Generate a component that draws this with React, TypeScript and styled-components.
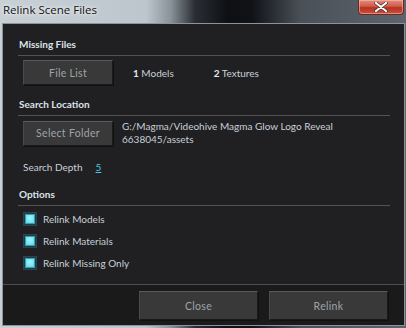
import React from "react";
import styled, { createGlobalStyle } from "styled-components";

const Global = createGlobalStyle`
  html, body { margin: 0; padding: 0; background: #3b4148; }
  body { width: 406px; height: 328px; overflow: hidden; font-family: "Lato", "Noto Sans", sans-serif; }
`;

const Window = styled.div`
  width: 406px;
  height: 328px;
  display: flex;
  flex-direction: column;
  background: linear-gradient(90deg, #c8d0d6 0%, #bcc6cc 36%, #8a939a 42%, #2a2e34 48%, #0e1014 56%, #101216 62%, #4a5058 74%, #5e646c 100%);
  box-sizing: border-box;
`;

const TitleBar = styled.div`
  height: 23px;
  display: flex;
  align-items: flex-start;
  justify-content: space-between;
  padding: 0 2px 0 3px;
  flex-shrink: 0;
`;

const Title = styled.div`
  font-family: "Open Sans", sans-serif;
  font-size: 11.5px;
  color: #101010;
  margin-top: 2px;
  text-shadow: 0 0 6px rgba(255,255,255,0.9), 0 0 3px rgba(255,255,255,0.8);
`;

const CloseBtn = styled.div`
  width: 46px;
  height: 15px;
  border: 1px solid #6a2a24;
  border-top: none;
  border-radius: 0 0 4px 4px;
  background: linear-gradient(180deg, #e09080 0%, #d05a48 45%, #b8301e 55%, #c85240 100%);
  display: flex;
  align-items: center;
  justify-content: center;
  box-shadow: inset 0 0 0 1px rgba(255,200,190,0.5);
  box-sizing: border-box;
`;

const Client = styled.div`
  flex: 1;
  margin: 0 1px 2px 2px;
  border: 1px solid #8a949c;
  background: #202022;
  display: flex;
  flex-direction: column;
  color: #c8d0d8;
  font-size: 10px;
`;

const Body = styled.div`
  flex: 1;
  padding: 13px 14px 0 15px;
  display: flex;
  flex-direction: column;
`;

const Heading = styled.div<{ $mt?: number }>`
  font-weight: 700;
  color: #dce2e8;
  font-size: 10px;
  line-height: 14px;
  margin-top: ${(p) => p.$mt ?? 0}px;
  padding-left: 1px;
  padding-bottom: 4px;
  border-bottom: 1px solid #525252;
`;

const Row = styled.div`
  display: flex;
  align-items: center;
  margin-top: 4px;
  padding-left: 5px;
`;

const Button = styled.button<{ $w?: number; $h?: number }>`
  width: ${(p) => p.$w ?? 90}px;
  height: ${(p) => p.$h ?? 25}px;
  background: #393939;
  border: 1px solid #1a1a1a;
  border-top-color: #5a5a5a;
  border-left-color: #4a4a4a;
  box-shadow: 1px 1px 0 #111;
  color: #9ea4aa;
  font-family: "Lato", sans-serif;
  font-size: 10.5px;
  letter-spacing: 0.3px;
  padding: 0;
  flex-shrink: 0;
`;

const Count = styled.span<{ $ml: number }>`
  margin-left: ${(p) => p.$ml}px;
  b { color: #e4e8ee; }
`;

const Path = styled.div`
  margin-left: 9px;
  line-height: 13px;
`;

const DepthRow = styled.div`
  display: flex;
  line-height: 14px;
  margin: 14px 0 0 5px;
`;

const DepthValue = styled.span`
  margin-left: 13px;
  color: #4cc6e6;
  text-decoration: underline;
`;

const OptionList = styled.div`
  display: flex;
  flex-direction: column;
  gap: 8px;
  margin-top: 6px;
  padding-left: 6px;
`;

const Option = styled.label`
  display: flex;
  align-items: center;
  gap: 7px;
  line-height: 14px;
`;

const Check = styled.span`
  width: 12px;
  height: 12px;
  box-sizing: border-box;
  border: 1px solid #1c3c48;
  background: radial-gradient(circle at 50% 40%, #9ff4fb 0%, #6fe0ee 60%, #4cb8cc 100%);
  box-shadow: 0 0 0 1px #2a4450, inset 0 0 0 1px #3a9cb0;
  display: inline-block;
`;

const Footer = styled.div`
  height: 41px;
  box-sizing: border-box;
  background: #1a1a1a;
  border-top: 1px solid #4e4e4e;
  display: flex;
  justify-content: flex-end;
  align-items: flex-start;
  gap: 11px;
  padding: 6px 16px 0 0;
`;

export default function App() {
  return (
    <>
      <Global />
      <Window>
        <TitleBar>
          <Title>Relink Scene Files</Title>
          <CloseBtn>
            <svg width="14" height="10" viewBox="0 0 14 10">
              <path d="M2 1 L12 9 M12 1 L2 9" stroke="#3a2a2a" strokeWidth="3.4" strokeLinecap="round" />
              <path d="M2 1 L12 9 M12 1 L2 9" stroke="#ffffff" strokeWidth="2.2" strokeLinecap="round" />
            </svg>
          </CloseBtn>
        </TitleBar>
        <Client>
          <Body>
            <Heading>Missing Files</Heading>
            <Row>
              <Button>File List</Button>
              <Count $ml={20}><b>1</b> Models</Count>
              <Count $ml={40}><b>2</b> Textures</Count>
            </Row>
            <Heading $mt={12}>Search Location</Heading>
            <Row>
              <Button>Select Folder</Button>
              <Path>
                G:/Magma/Videohive Magma Glow Logo Reveal
                <br />
                6638045/assets
              </Path>
            </Row>
            <DepthRow>
              <span>Search Depth</span>
              <DepthValue>5</DepthValue>
            </DepthRow>
            <Heading $mt={13}>Options</Heading>
            <OptionList>
              <Option><Check />Relink Models</Option>
              <Option><Check />Relink Materials</Option>
              <Option><Check />Relink Missing Only</Option>
            </OptionList>
          </Body>
          <Footer>
            <Button $w={119} $h={29}>Close</Button>
            <Button $w={119} $h={29}>Relink</Button>
          </Footer>
        </Client>
      </Window>
    </>
  );
}
